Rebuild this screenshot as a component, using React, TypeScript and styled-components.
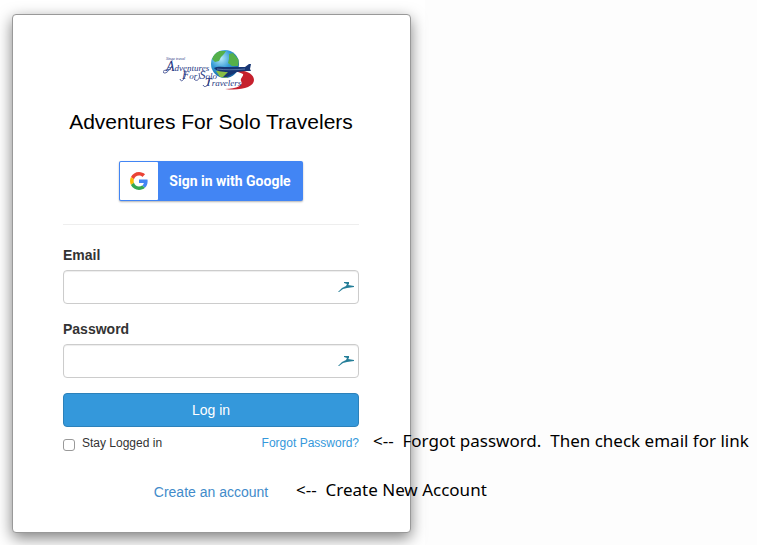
import React from "react";
import styled, { createGlobalStyle } from "styled-components";

const GlobalStyle = createGlobalStyle`
  *, *::before, *::after { box-sizing: border-box; }
  body {
    margin: 0;
    background: #fdfdfd;
    color: #333;
    font-family: "Liberation Sans", Arial, sans-serif;
    font-size: 14px;
    line-height: 20px;
    overflow-x: hidden;
  }
`;

const Stage = styled.main`
  max-width: 425px;
  padding: 14px 14px 12px 12px;
  background: #fff;
`;

const Card = styled.section`
  padding: 34px 51px 30px 50px;
  background: #fff;
  border: 1px solid #999;
  border-radius: 4px;
  box-shadow: 0 5px 15px rgba(0, 0, 0, 0.5);
`;

const Header = styled.header`
  display: flex;
  flex-direction: column;
  align-items: center;
  padding-bottom: 23px;
  border-bottom: 1px solid #eee;
`;

const Logo = styled.svg`
  display: block;
  width: 96px;
  height: 43px;
`;

const Title = styled.h1`
  margin: 18px 0 27px;
  color: #000;
  font-size: 21px;
  font-weight: 400;
  line-height: 24px;
  white-space: nowrap;
`;

const GoogleButton = styled.button`
  display: flex;
  align-items: stretch;
  width: 184px;
  height: 40px;
  padding: 1px;
  border: 0;
  border-radius: 2px;
  background: #4285f4;
  box-shadow: 0 1px 2px rgba(0, 0, 0, 0.3);
  color: #fff;
  font-family: Roboto, sans-serif;
  font-size: 14px;
  font-weight: 700;
  white-space: nowrap;
  cursor: pointer;
`;

const GoogleMark = styled.span`
  display: grid;
  place-items: center;
  width: 38px;
  background: #fff;
  border-radius: 1px;
`;

const GoogleText = styled.span`
  flex: 1;
  align-self: center;
  text-align: center;
`;

const Form = styled.form`
  display: flex;
  flex-direction: column;
  gap: 15px;
  padding-top: 20px;
`;

const Field = styled.div`
  display: flex;
  flex-direction: column;
  gap: 5px;
`;

const Label = styled.label`
  font-weight: 700;
`;

const InputWrap = styled.div`
  position: relative;
`;

const Input = styled.input`
  display: block;
  width: 100%;
  height: 34px;
  padding: 6px 30px 6px 12px;
  border: 1px solid #ccc;
  border-radius: 4px;
  background: #fff;
  box-shadow: inset 0 1px 1px rgba(0, 0, 0, 0.075);
  color: #555;
  font: inherit;
`;

const FieldIcon = styled.svg`
  position: absolute;
  top: 9px;
  right: 4px;
  width: 18px;
  height: 16px;
  pointer-events: none;
`;

const SubmitButton = styled.button`
  height: 34px;
  border: 1px solid #2c81ba;
  border-radius: 4px;
  background: #3498db;
  color: #fff;
  font: inherit;
  cursor: pointer;
`;

const Options = styled.div`
  position: relative;
  display: flex;
  justify-content: space-between;
  margin-top: -9px;
  font-size: 12px;
  white-space: nowrap;
`;

const CheckLabel = styled.label`
  display: flex;
  gap: 7px;
`;

const Checkbox = styled.input`
  appearance: none;
  width: 12px;
  height: 12px;
  margin: 6px 0 0;
  border: 1px solid #999;
  border-radius: 3px;
  background: #fff;
  &:checked { background: #3498db; }
`;

const Link = styled.a<{ $tone: string }>`
  color: ${(p) => p.$tone};
  text-decoration: none;
`;

const CreateRow = styled.div`
  position: relative;
  display: flex;
  justify-content: center;
  margin-top: 14px;
`;

const Note = styled.span<{ $left: string }>`
  position: absolute;
  left: ${(p) => p.$left};
  top: -3px;
  color: #000;
  font-family: "Noto Sans", sans-serif;
  font-size: 17px;
  line-height: 22px;
  white-space: pre;
`;

function TravelLogo() {
  return (
    <Logo viewBox="0 0 96 43" role="img" aria-label="Adventures For Solo Travelers">
      <defs>
        <radialGradient id="sea" cx="35%" cy="30%" r="75%">
          <stop offset="0" stopColor="#b9ebfa" />
          <stop offset="0.5" stopColor="#359bd6" />
          <stop offset="1" stopColor="#145f9f" />
        </radialGradient>
        <clipPath id="world"><circle cx="62" cy="15" r="14" /></clipPath>
      </defs>
      <path d="M72 22 C82 20 91 25 91 31 C91 38 78 42 62 40 C74 40 81 36 78 32 C77 29 81 27 80 25 C78 24 75 23 72 22Z" fill="#c6202d" />
      <circle cx="62" cy="15" r="14" fill="url(#sea)" />
      <g clipPath="url(#world)" fill="#55b04a">
        <path d="M51 5 L56 2 L63 2 L61 5 L58 8 L56 12 L52 13 L49 10Z" />
        <path d="M66 5 L70 4 L76 11 L75 17 L69 17 L65 14 L66 10Z" />
        <path d="M53 22 L60 21 L66 23 L64 29 L57 28Z" fill="#88bd46" />
      </g>
      <path d="M51 19 C54 17 60 18 66 18 L82 18 L86 15 L88 15 L87 20 L88 22 L82 22 L74 23 L64 28 L60 28 L65 23 C59 23 53 22 51 19Z" fill="#173674" />
      <path d="M54 20 C62 21 71 21 82 20" fill="none" stroke="#b8d6ee" strokeWidth="0.4" />
      <g fill="#283984" fontFamily="Liberation Serif, serif" fontStyle="italic">
        <text x="3" y="11" fontSize="4">Singe travel</text>
        <text x="3" y="22" fontSize="9"><tspan fontSize="14">A</tspan>dventures</text>
        <text x="19" y="30" fontSize="9"><tspan fontSize="12">F</tspan>or <tspan fontSize="12">S</tspan>olo</text>
        <text x="42" y="37" fontSize="9"><tspan fontSize="12">T</tspan>ravelers</text>
      </g>
      <path d="M9 17 C6 22 2 26 0 23 C0 21 4 21 8 20 M23 23 C22 31 18 34 17 30 M36 24 C38 31 33 33 31 30 M47 29 C46 36 42 40 40 36" fill="none" stroke="#283984" strokeWidth="0.8" />
    </Logo>
  );
}

function GoogleIcon() {
  return (
    <svg width="18" height="18" viewBox="0 0 48 48" aria-hidden="true">
      <path fill="#EA4335" d="M24 9.5c3.54 0 6.71 1.22 9.21 3.6l6.85-6.85C35.9 2.38 30.47 0 24 0 14.62 0 6.51 5.38 2.56 13.22l7.98 6.19C12.43 13.72 17.74 9.5 24 9.5z" />
      <path fill="#4285F4" d="M46.98 24.55c0-1.57-.15-3.09-.38-4.55H24v9.02h12.94c-.58 2.96-2.26 5.48-4.78 7.18l7.73 6c4.51-4.18 7.09-10.36 7.09-17.65z" />
      <path fill="#FBBC05" d="M10.53 28.59A14.5 14.5 0 0 1 9.77 24c0-1.6.27-3.14.76-4.59l-7.98-6.19A23.9 23.9 0 0 0 0 24c0 3.88.92 7.54 2.56 10.78l7.97-6.19z" />
      <path fill="#34A853" d="M24 48c6.48 0 11.93-2.13 15.89-5.81l-7.73-6c-2.15 1.45-4.92 2.3-8.16 2.3-6.26 0-11.57-4.22-13.47-9.91l-7.98 6.19C6.51 42.62 14.62 48 24 48z" />
    </svg>
  );
}

function BirdIcon() {
  return (
    <FieldIcon viewBox="0 0 18 16" aria-hidden="true">
      <path d="M1 13 L5 9 L9 7 L10 5 L7 4 L7 3 L12 3 L12 5 L11 6 L17 7 L17 8 L10 9 L6 10 L2 13Z" fill="#257e98" />
    </FieldIcon>
  );
}

function TextField({ id, label, type }: { id: string; label: string; type: string }) {
  return (
    <Field>
      <Label htmlFor={id}>{label}</Label>
      <InputWrap>
        <Input id={id} name={id} type={type} />
        <BirdIcon />
      </InputWrap>
    </Field>
  );
}

export default function App() {
  return (
    <>
      <GlobalStyle />
      <Stage>
        <Card>
          <Header>
            <TravelLogo />
            <Title>Adventures For Solo Travelers</Title>
            <GoogleButton type="button">
              <GoogleMark><GoogleIcon /></GoogleMark>
              <GoogleText>Sign in with Google</GoogleText>
            </GoogleButton>
          </Header>
          <Form onSubmit={(e) => e.preventDefault()}>
            <TextField id="email" label="Email" type="email" />
            <TextField id="password" label="Password" type="password" />
            <SubmitButton type="submit">Log in</SubmitButton>
            <Options>
              <CheckLabel htmlFor="stay">
                <Checkbox id="stay" type="checkbox" />
                Stay Logged in
              </CheckLabel>
              <Link href="#forgot" $tone="#3498db">Forgot Password?</Link>
              <Note $left="calc(100% + 14px)">{"<--  Forgot password.  Then check email for link"}</Note>
            </Options>
            <CreateRow>
              <Link href="#create" $tone="#428bca">Create an account</Link>
              <Note $left="calc(50% + 85px)">{"<--  Create New Account"}</Note>
            </CreateRow>
          </Form>
        </Card>
      </Stage>
    </>
  );
}
